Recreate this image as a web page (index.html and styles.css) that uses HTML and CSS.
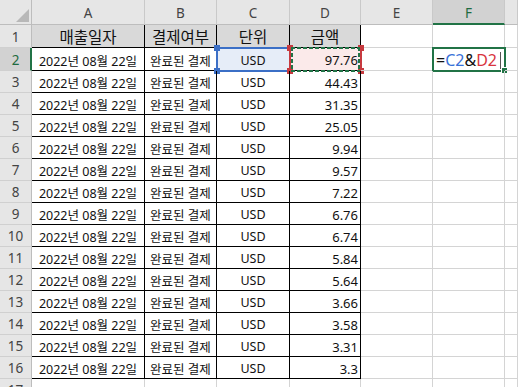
FILE: index.html
```html
<!DOCTYPE html>
<html lang="ko">
<head>
<meta charset="utf-8">
<title>Sheet</title>
<link rel="stylesheet" href="styles.css">
</head>
<body>
<div class="sheet">
  <div class="corner"><svg width="32" height="25" viewBox="0 0 32 25"><polygon points="29,9 29,22 16,22" fill="#b8b8b8"/></svg></div>
  <div class="ch">A</div><div class="ch">B</div><div class="ch">C</div><div class="ch">D</div><div class="ch">E</div><div class="ch sel">F</div><div class="ch"></div>

  <div class="rh">1</div>
  <div class="c t th">매출일자</div><div class="c t th">결제여부</div><div class="c t th">단위</div><div class="c t th">금액</div><div class="c"></div><div class="c"></div><div class="c"></div>

  <div class="rh sel">2</div>
  <div class="c t ctr">2022년 08월 22일</div><div class="c t ctr">완료된 결제</div>
  <div class="c t ctr refc">USD<span class="ref blue"><i class="sq tl"></i><i class="sq tr"></i><i class="sq bl"></i><i class="sq br"></i></span></div>
  <div class="c t num refd">97.76<span class="ref red"><i class="sq tl"></i><i class="sq tr"></i><i class="sq bl"></i><i class="sq br"></i></span><span class="ants"></span></div>
  <div class="c"></div>
  <div class="c active"><span class="formula">=<span class="fc">C2</span>&amp;<span class="fd">D2</span></span><span class="caret"></span><span class="frame"></span><span class="handle"></span></div>
  <div class="c"></div>

  <div class="rh">3</div><div class="c t ctr">2022년 08월 22일</div><div class="c t ctr">완료된 결제</div><div class="c t ctr">USD</div><div class="c t num">44.43</div><div class="c"></div><div class="c"></div><div class="c"></div>
  <div class="rh">4</div><div class="c t ctr">2022년 08월 22일</div><div class="c t ctr">완료된 결제</div><div class="c t ctr">USD</div><div class="c t num">31.35</div><div class="c"></div><div class="c"></div><div class="c"></div>
  <div class="rh">5</div><div class="c t ctr">2022년 08월 22일</div><div class="c t ctr">완료된 결제</div><div class="c t ctr">USD</div><div class="c t num">25.05</div><div class="c"></div><div class="c"></div><div class="c"></div>
  <div class="rh">6</div><div class="c t ctr">2022년 08월 22일</div><div class="c t ctr">완료된 결제</div><div class="c t ctr">USD</div><div class="c t num">9.94</div><div class="c"></div><div class="c"></div><div class="c"></div>
  <div class="rh">7</div><div class="c t ctr">2022년 08월 22일</div><div class="c t ctr">완료된 결제</div><div class="c t ctr">USD</div><div class="c t num">9.57</div><div class="c"></div><div class="c"></div><div class="c"></div>
  <div class="rh">8</div><div class="c t ctr">2022년 08월 22일</div><div class="c t ctr">완료된 결제</div><div class="c t ctr">USD</div><div class="c t num">7.22</div><div class="c"></div><div class="c"></div><div class="c"></div>
  <div class="rh">9</div><div class="c t ctr">2022년 08월 22일</div><div class="c t ctr">완료된 결제</div><div class="c t ctr">USD</div><div class="c t num">6.76</div><div class="c"></div><div class="c"></div><div class="c"></div>
  <div class="rh">10</div><div class="c t ctr">2022년 08월 22일</div><div class="c t ctr">완료된 결제</div><div class="c t ctr">USD</div><div class="c t num">6.74</div><div class="c"></div><div class="c"></div><div class="c"></div>
  <div class="rh">11</div><div class="c t ctr">2022년 08월 22일</div><div class="c t ctr">완료된 결제</div><div class="c t ctr">USD</div><div class="c t num">5.84</div><div class="c"></div><div class="c"></div><div class="c"></div>
  <div class="rh">12</div><div class="c t ctr">2022년 08월 22일</div><div class="c t ctr">완료된 결제</div><div class="c t ctr">USD</div><div class="c t num">5.64</div><div class="c"></div><div class="c"></div><div class="c"></div>
  <div class="rh">13</div><div class="c t ctr">2022년 08월 22일</div><div class="c t ctr">완료된 결제</div><div class="c t ctr">USD</div><div class="c t num">3.66</div><div class="c"></div><div class="c"></div><div class="c"></div>
  <div class="rh">14</div><div class="c t ctr">2022년 08월 22일</div><div class="c t ctr">완료된 결제</div><div class="c t ctr">USD</div><div class="c t num">3.58</div><div class="c"></div><div class="c"></div><div class="c"></div>
  <div class="rh">15</div><div class="c t ctr">2022년 08월 22일</div><div class="c t ctr">완료된 결제</div><div class="c t ctr">USD</div><div class="c t num">3.31</div><div class="c"></div><div class="c"></div><div class="c"></div>
  <div class="rh">16</div><div class="c t ctr">2022년 08월 22일</div><div class="c t ctr">완료된 결제</div><div class="c t ctr">USD</div><div class="c t num">3.3</div><div class="c"></div><div class="c"></div><div class="c"></div>
  <div class="rh">17</div><div class="c"></div><div class="c"></div><div class="c"></div><div class="c"></div><div class="c"></div><div class="c"></div><div class="c"></div>
</div>
</body>
</html>
```

FILE: styles.css
```css
html, body {
  margin: 0;
  padding: 0;
  background: #ffffff;
  overflow: hidden;
}

.sheet {
  display: grid;
  grid-template-columns: 32px 113px 72px 73px 71px 72px 72px 1fr;
  grid-template-rows: 25px 23px 23px repeat(14, 22px) 22px;
  width: 518px;
  height: 387px;
  overflow: hidden;
  font-family: "Noto Sans", "Noto Sans CJK KR", sans-serif;
  font-size: 12.5px;
  color: #111111;
}

.sheet > div {
  box-sizing: border-box;
  border-right: 1px solid #d4d4d4;
  border-bottom: 1px solid #d4d4d4;
  min-width: 0;
}

.corner {
  background: #e6e6e6;
  border-right-color: #bdbdbd !important;
  border-bottom-color: #bdbdbd !important;
}
.corner svg { display: block; }

.ch {
  background: #e6e6e6;
  border-right-color: #c9c9c9 !important;
  border-bottom-color: #bdbdbd !important;
  display: flex;
  align-items: center;
  justify-content: center;
  font-family: "Noto Sans", sans-serif;
  font-size: 13.5px;
  color: #444444;
  padding-top: 1px;
}
.ch.sel {
  background: #d2d2d2;
  color: #1e6b40;
  border-bottom: 2px solid #217346 !important;
  padding-top: 2px;
}

.rh {
  background: #e6e6e6;
  border-right-color: #bdbdbd !important;
  border-bottom-color: #d0d0d0 !important;
  display: flex;
  align-items: center;
  justify-content: center;
  font-family: "Noto Sans", sans-serif;
  font-size: 13.5px;
  color: #444444;
  padding-top: 1px;
}
.rh.sel {
  background: #d2d2d2;
  color: #1e6b40;
  border-right: 2px solid #217346 !important;
  padding-left: 1px;
}

.c {
  position: relative;
  display: flex;
  align-items: center;
  white-space: nowrap;
  padding-top: 2px;
}

.sheet > .t {
  border-right-color: #000000;
  border-bottom-color: #000000;
}

.th {
  background: #d9d9d9;
  justify-content: center;
  font-family: "Noto Sans CJK KR", sans-serif;
  font-size: 15.5px;
  color: #111111;
  padding-top: 0;
}

.ctr { justify-content: center; }
.num { justify-content: flex-end; padding-right: 2px; font-size: 13px; }

.refc { background: #e6edf8; }
.refd { background: #fbeaea; }

.ref {
  position: absolute;
  top: -1px;
  left: -1px;
  right: -2px;
  bottom: -2px;
  border: 2px solid;
  pointer-events: none;
}
.ref.blue { border-color: #3b6fc6; }
.ref.red { border-color: #c73a3f; border-top-color: transparent; border-bottom-color: transparent; }

.sq {
  position: absolute;
  width: 6px;
  height: 6px;
}
.blue .sq { background: #3b6fc6; }
.red .sq { background: #c73a3f; }
.sq.tl { top: -4px; left: -4px; }
.sq.tr { top: -4px; right: -4px; }
.sq.bl { bottom: -4px; left: -4px; }
.sq.br { bottom: -4px; right: -4px; }

.ants {
  position: absolute;
  top: -1px;
  left: 1px;
  right: 0px;
  bottom: -2px;
  background:
    repeating-linear-gradient(90deg, #217346 0 4px, transparent 4px 6px) top left / 100% 2px no-repeat,
    repeating-linear-gradient(90deg, #217346 0 4px, transparent 4px 6px) bottom left / 100% 2px no-repeat,
    repeating-linear-gradient(180deg, #217346 0 4px, transparent 4px 6px) top left / 2px 100% no-repeat,
    repeating-linear-gradient(180deg, #217346 0 4px, transparent 4px 6px) top right / 2px 100% no-repeat;
}

.active {
  padding-left: 3px;
  padding-top: 1px;
  font-family: "Noto Sans", sans-serif;
  font-size: 16px;
  color: #111111;
}
.fc { color: #3a72d8; }
.fd { color: #d8353f; }
.caret {
  display: inline-block;
  width: 1px;
  height: 17px;
  background: #555555;
  margin-left: 3px;
  margin-top: 2px;
}
.frame {
  position: absolute;
  top: -1px;
  left: -1px;
  right: -2px;
  bottom: -2px;
  border: 2px solid #217346;
}
.handle {
  position: absolute;
  right: -4px;
  bottom: -4px;
  width: 5px;
  height: 5px;
  background: #217346;
  border: 1px solid #ffffff;
}
```
